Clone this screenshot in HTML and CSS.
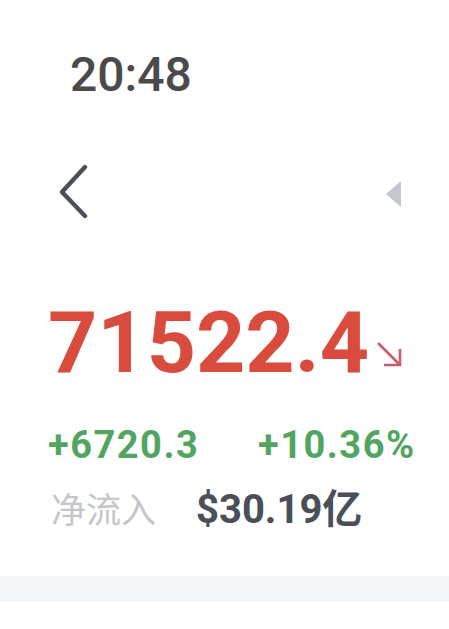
FILE: index.html
```html
<!DOCTYPE html>
<html lang="zh-CN">
<head>
    <meta charset="UTF-8">
    <meta name="viewport" content="width=device-width, initial-scale=1.0">
    <title>行情</title>
    <link rel="stylesheet" href="styles.css">
</head>
<body>
    <div class="status">20:48</div>

    <div class="nav">
        <svg class="back" width="32" height="56" viewBox="0 0 32 56">
            <path d="M27 3 L4 28 L27 52" fill="none" stroke="#4b4f57" stroke-width="4.4" stroke-linecap="round" stroke-linejoin="round"/>
        </svg>
        <svg class="more" width="16" height="26" viewBox="0 0 16 26">
            <path d="M15 0 L15 26 L0 13 Z" fill="#c3c6cb"/>
        </svg>
    </div>

    <div class="quote">
        <div class="price">71522.4<svg class="trend" width="28" height="28" viewBox="0 0 28 28">
            <path d="M3 3 L25 25 M9 25 H25 V9" fill="none" stroke="#cc5b6e" stroke-width="2.6"/>
        </svg></div>

        <div class="change">
            <span>+6720.3</span>
            <span>+10.36%</span>
        </div>

        <div class="flow">
            <span class="flow-label">净流入</span>
            <span class="flow-value">$30.19亿</span>
        </div>
    </div>

    <div class="band"></div>
</body>
</html>
```

FILE: styles.css
```css
body {
    margin: 0;
    background: #fff;
    font-family: Roboto, "Noto Sans CJK SC", sans-serif;
}

.status {
    padding: 51px 0 0 70px;
    font-size: 48px;
    line-height: 48px;
    font-weight: 500;
    color: #4a4a4a;
}

.nav {
    display: flex;
    justify-content: space-between;
    align-items: center;
    height: 56px;
    margin-top: 65px;
    padding: 0 47px 0 58px;
}

.nav .more {
    margin-top: 4px;
}

.quote {
    padding-left: 48px;
}

.price {
    margin-top: 73px;
    font-size: 86px;
    line-height: 100px;
    font-weight: 700;
    color: #d84b3d;
}

.trend {
    margin-left: 6px;
    vertical-align: 4px;
}

.change {
    display: grid;
    grid-template-columns: 210px auto;
    margin-top: 30px;
    font-size: 38px;
    line-height: 44px;
    font-weight: 700;
    letter-spacing: 1.5px;
    color: #52a560;
}

.flow {
    display: grid;
    grid-template-columns: 145px auto;
    align-items: baseline;
    margin-top: 17px;
    padding-left: 3px;
    line-height: 48px;
}

.flow-label {
    font-family: "Noto Sans CJK SC", sans-serif;
    font-size: 35px;
    color: #c4c6ca;
}

.flow-value {
    font-size: 40px;
    font-weight: 700;
    color: #4b4f57;
}

.band {
    height: 26px;
    margin-top: 42px;
    background: #f5f6f8;
}
```
